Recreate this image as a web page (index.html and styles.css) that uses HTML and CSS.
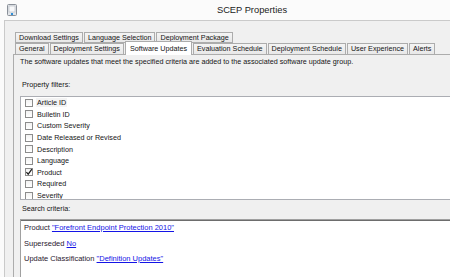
FILE: index.html
```html
<!DOCTYPE html>
<html lang="en">
<head>
  <meta charset="UTF-8" />
  <title>SCEP Properties</title>
  <link rel="stylesheet" href="styles.css">
</head>
<body>

  <div class="window">
    <div class="titlebar">
      <svg class="app-icon" width="10" height="12" viewBox="0 0 10 12">
        <rect x="0.5" y="0.5" width="9" height="11" rx="1" fill="#e3e6ea" stroke="#8a9099"/>
        <rect x="2" y="2" width="6" height="6" fill="#f7f8fa" stroke="#b4b9c0" stroke-width="0.6"/>
        <rect x="4" y="9" width="2" height="2" fill="#2f8fd8"/>
      </svg>
      <span class="title">SCEP Properties</span>
    </div>

    <div class="client">
      <div class="tabs">
        <div class="tab-row back">
          <div class="tab">Download Settings</div>
          <div class="tab">Language Selection</div>
          <div class="tab">Deployment Package</div>
        </div>
        <div class="tab-row front">
          <div class="tab">General</div>
          <div class="tab">Deployment Settings</div>
          <div class="tab selected">Software Updates</div>
          <div class="tab">Evaluation Schedule</div>
          <div class="tab">Deployment Schedule</div>
          <div class="tab">User Experience</div>
          <div class="tab">Alerts</div>
        </div>
      </div>

      <div class="page">
        <p class="intro">The software updates that meet the specified criteria are added to the associated software update group.</p>

        <div class="label filters-label">Property filters:</div>
        <ul class="filters">
          <li><span class="check"></span><span class="focus">Article ID</span></li>
          <li><span class="check"></span>Bulletin ID</li>
          <li><span class="check"></span>Custom Severity</li>
          <li><span class="check"></span>Date Released or Revised</li>
          <li><span class="check"></span>Description</li>
          <li><span class="check"></span>Language</li>
          <li>
            <span class="check">
              <svg width="8" height="8" viewBox="0 0 8 8"><path d="M1.4 4.1 L3.2 6.2 L6.9 1.2" stroke="#1c1c1c" stroke-width="1.2" fill="none"/></svg>
            </span>Product
          </li>
          <li><span class="check"></span>Required</li>
          <li><span class="check"></span>Severity</li>
        </ul>

        <div class="label criteria-label">Search criteria:</div>
        <div class="criteria">
          <p>Product <a href="#">"Forefront Endpoint Protection 2010"</a></p>
          <p>Superseded <a href="#">No</a></p>
          <p>Update Classification <a href="#">"Definition Updates"</a></p>
        </div>
      </div>
    </div>
  </div>

</body>
</html>
```

FILE: styles.css
```css
body {
  margin: 0;
  overflow: hidden;
  background: #fbfbfb;
  font-family: "Liberation Sans", Arial, sans-serif;
  font-size: 7.2px;
  color: #151515;
}

.window {
  width: 504px;
}

.titlebar {
  height: 20px;
  display: grid;
  grid-template-columns: 20px 1fr 20px;
  align-items: center;
}

.app-icon {
  margin-left: 7px;
}

.title {
  text-align: center;
  font-size: 9.3px;
  color: #222;
}

.client {
  margin-left: 4px;
  border-left: 1px solid #cacaca;
  border-top: 1px solid #cacaca;
  background: #f0f0f0;
  padding: 11px 0 0 8px;
  height: 300px;
}

.tabs {
  margin-left: 2px;
}

.tab-row {
  display: flex;
  align-items: flex-end;
  gap: 1px;
}

.tab-row.front {
  margin-top: -2px;
}

.tab {
  box-sizing: border-box;
  height: 11px;
  line-height: 9px;
  padding: 0 3px;
  border: 1px solid #acacac;
  background: linear-gradient(#f4f4f4, #e8e8e8);
  white-space: nowrap;
}

.tab-row.front .tab {
  border-bottom: none;
}

.tab.selected {
  position: relative;
  z-index: 1;
  height: 14px;
  margin-bottom: -1px;
  padding: 2px 4px 0;
  background: #fff;
}

.page {
  border: 1px solid #acacac;
  border-right: none;
  padding: 2px 0 0 6px;
  height: 240px;
}

.intro {
  margin: 0;
  line-height: 9px;
}

.label {
  line-height: 9px;
  margin-left: 2px;
}

.filters-label {
  margin-top: 14px;
}

.filters {
  list-style: none;
  margin: 7px 0 0;
  padding: 0 0 0 4px;
  width: 500px;
  height: 104px;
  box-sizing: border-box;
  overflow: hidden;
  background: #fff;
  border: 1px solid #abadb3;
}

.filters li {
  display: flex;
  align-items: center;
  gap: 4px;
  height: 11.6px;
}

.check {
  box-sizing: border-box;
  width: 8px;
  height: 8px;
  border: 1px solid #8c8c8c;
  background: linear-gradient(#f2f2f2, #fff);
  display: flex;
  align-items: center;
  justify-content: center;
}

.check svg {
  flex: none;
}

.focus {
  background: #f3f3f3;
  padding: 0 1px;
  margin-left: -1px;
}

.criteria-label {
  margin-top: 4px;
}

.criteria {
  margin-top: 6px;
  width: 500px;
  height: 80px;
  padding-left: 3px;
  background: #fff;
  border: 1px solid #a0a0a0;
  box-shadow: inset 0 1px 0 #6d6d6d;
  font-size: 7.5px;
  line-height: 15.5px;
  color: #2a2030;
}

.criteria p {
  margin: 0;
}

.criteria a {
  color: #1414e6;
  text-decoration: underline;
}
```
